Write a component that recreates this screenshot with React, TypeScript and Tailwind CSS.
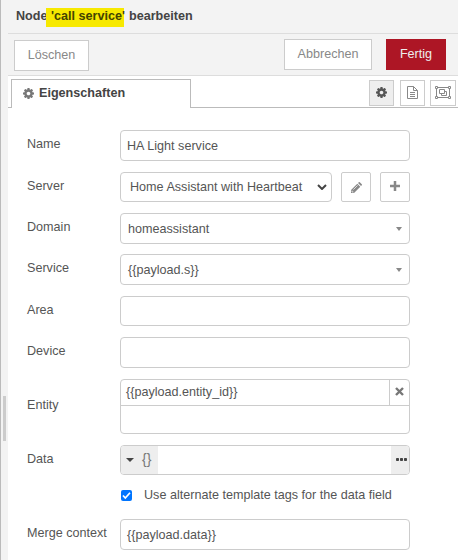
import type { ReactNode } from 'react';

function Cog({ className }: { className: string }) {
  return (
    <svg viewBox="0 128 1536 1536" className={className} fill="currentColor">
      <path d="M1024 896q0-106-75-181t-181-75-181 75-75 181 75 181 181 75 181-75 75-181zm512-109v222q0 12-8 23t-20 13l-185 28q-19 54-39 91 35 50 107 138 10 12 10 25t-9 23q-27 37-99 108t-94 71q-12 0-26-9l-138-108q-44 23-91 38-16 136-29 186-7 28-36 28h-222q-14 0-24.500-8.500t-11.500-21.500l-28-184q-49-16-90-37l-141 107q-10 9-25 9-14 0-25-11-126-114-165-168-7-10-7-23 0-12 8-23 15-21 51-66.500t54-70.500q-27-50-41-99l-183-27q-13-2-21-12.500t-8-23.500v-222q0-12 8-23t19-13l186-28q14-46 39-92-40-57-107-138-10-12-10-24 0-10 9-23 26-36 98.500-107.500t94.500-71.500q13 0 26 10l138 107q44-23 91-38 16-136 29-186 7-28 36-28h222q14 0 24.500 8.500t11.500 21.500l28 184q49 16 90 37l142-107q9-9 24-9 13 0 25 10 129 119 165 170 7 8 7 22 0 12-8 23-15 21-51 66.500t-54 70.500q26 50 41 98l183 28q13 2 21 12.500t8 23.500z" />
    </svg>
  );
}

function DocIcon() {
  return (
    <svg viewBox="0 0 11 13" className="mb-px h-[13px] w-[11px]" fill="none" stroke="currentColor">
      <path d="M.5.5h6l4 4v8H.5zM6.500.5v4h4M3 6.500h5M3 8.500h5M3 10.500h5" />
    </svg>
  );
}

function GroupIcon() {
  return (
    <svg viewBox="0 0 16 13" className="h-[13px] w-4 shrink-0" fill="none" stroke="currentColor">
      <path d="M2.500 1.500h11M2.500 11.500h11M1.500 2.500v8M14.500 2.500v8M4.500 3.500h5v4h-5zM9.500 5.500h2v4h-5v-2" />
      <path d="M.5.5h2v2h-2zM13.500.5h2v2h-2zM.5 10.500h2v2h-2zM13.500 10.500h2v2h-2z" />
    </svg>
  );
}

function Pencil() {
  return (
    <svg viewBox="0 0 11 11" className="h-[11px] w-[11px]" fill="#888">
      <path d="M0 11V8l6.300-6.300 3 3L3 11zM7 1l.8-.8q.5-.4 1 0l2 2q.4.5 0 1L10 4z" />
      <path d="M1 8.500v1.500h1.500M2.400 7.600l4.200-4.200" fill="none" stroke="white" strokeWidth=".7" />
    </svg>
  );
}

function Caret() {
  return (
    <svg viewBox="0 0 6 4" className="ml-auto mr-[7px] h-1 w-[6px]" fill="#888">
      <path d="M0 0h6L3 4z" />
    </svg>
  );
}

function Row({ label, className, children }: { label: string; className: string; children: ReactNode }) {
  return (
    <div className={`flex ${className}`}>
      <div className="flex w-[93px] shrink-0 items-center whitespace-nowrap pb-[3px]">{label}</div>
      {children}
    </div>
  );
}

const box = 'flex items-center rounded-[4px] border border-[#ccc] bg-white whitespace-nowrap';
const tool = 'flex h-[26px] items-center justify-center border border-[#ccc]';

export default function App() {
  return (
    <div className="flex h-[560px] w-[458px] overflow-hidden bg-white text-[12.6px] leading-5 text-[#555] [font-family:'Liberation_Sans',Arial,sans-serif]">
      <div className="flex w-2 shrink-0 border-l border-[#bbb] bg-[#f3f3f3] pl-[2px] pt-[396px]">
        <div className="h-[45px] w-[3px] bg-[#ccc]" />
      </div>
      <div className="flex w-[450px] flex-col">
        <header className="flex h-[34px] items-center border-b border-[#ddd] bg-[#f3f3f3] pb-[2px] pl-2 font-bold text-[#444] whitespace-pre">
          <span>Node</span>
          <span className="-mb-[3px] -ml-px mr-px h-[19px] w-[78px] bg-[#f7e900] pl-px leading-[17px] text-[#444400]">{" 'call service'"}</span>
          <span> bearbeiten</span>
        </header>
        <div className="flex h-[42px] border-b border-[#ddd] bg-[#f3f3f3] pl-[6px] pt-[5px] text-[#888]">
          <button className="mt-px flex h-[31px] w-[75px] items-center justify-center border border-[#ccc] bg-white pb-[2px]">Löschen</button>
          <button className="ml-[195px] flex h-[31px] w-[88px] items-center justify-center border border-[#ccc] bg-white pb-[2px]">Abbrechen</button>
          <button className="ml-[14px] flex h-[31px] w-[60px] items-center justify-center bg-[#ad1625] pb-[2px] text-[#eee]">Fertig</button>
        </div>
        <div className="flex h-8 items-end">
          <div className="h-px w-[3px] bg-[#bbb]" />
          <div className="flex h-[29px] w-[180px] items-center border border-b-0 border-[#bbb] pb-[2px] pl-[11px] font-bold text-[#444]">
            <Cog className="mr-[5px] h-[11px] w-[11px] text-[#777]" />
            Eigenschaften
          </div>
          <div className="flex h-7 grow border-b border-[#bbb] pl-[178px] text-[#888]">
            <div className={`${tool} w-[25px] bg-[#eee] pb-[2px] text-[#555]`}><Cog className="h-[11px] w-[11px]" /></div>
            <div className={`${tool} ml-[6px] w-[25px]`}><DocIcon /></div>
            <div className={`${tool} ml-[5px] w-[26px] pb-px`}><GroupIcon /></div>
          </div>
        </div>
        <main className="flex flex-col pl-[19px] pt-[22px]">
          <Row label="Name" className="h-[31px]">
            <div className={`${box} w-[290px] pl-[6px]`}>HA Light service</div>
          </Row>
          <Row label="Server" className="mt-[11px] h-[30px]">
            <div className={`${box} w-[212px] pb-px pl-[9px]`}>
              Home Assistant with Heartbeat
              <svg viewBox="0 0 10 6" className="ml-auto mr-1 h-[6px] w-[10px]" fill="none" stroke="#444" strokeWidth="2">
                <path d="M1 1l4 4 4-4" />
              </svg>
            </div>
            <div className="ml-[9px] flex w-[30px] items-center justify-center rounded-[2px] border border-[#ccc]">
              <Pencil />
            </div>
            <div className="ml-[9px] flex w-[30px] items-center justify-center rounded-[2px] border border-[#ccc] pb-[2px]">
              <svg viewBox="0 0 10 10" className="h-[10px] w-[10px]" stroke="#888" strokeWidth="2.500">
                <path d="M5 0v10M0 5h10" />
              </svg>
            </div>
          </Row>
          <Row label="Domain" className="mt-[11px] h-[31px]">
            <div className={`${box} w-[290px] pl-[7px]`}>homeassistant<Caret /></div>
          </Row>
          <Row label="Service" className="mt-[10px] h-[31px]">
            <div className={`${box} w-[290px] pl-[7px]`}>{'{{payload.s}}'}<Caret /></div>
          </Row>
          <Row label="Area" className="mt-[11px] h-[30px]">
            <div className={`${box} w-[290px]`} />
          </Row>
          <Row label="Device" className="mt-[11px] h-[31px]">
            <div className={`${box} w-[290px]`} />
          </Row>
          <Row label="Entity" className="mt-[11px] h-[55px]">
            <div className="w-[290px] rounded-[4px] border border-[#ccc]">
              <div className="flex h-[26px] border-b border-[#ccc]">
                <div className="flex grow items-center pb-px pl-[5px]">{'{{payload.entity_id}}'}</div>
                <div className="flex w-5 items-center justify-center border-l border-[#ccc] pb-[2px]">
                  <svg viewBox="0 0 9 9" className="h-[9px] w-[9px]" stroke="#777" strokeWidth="2.400">
                    <path d="M1 1l7 7M8 1L1 8" />
                  </svg>
                </div>
              </div>
            </div>
          </Row>
          <Row label="Data" className="mt-[11px] h-[30px]">
            <div className={`${box} w-[290px] justify-between overflow-hidden`}>
              <div className="flex h-full w-[37px] items-center bg-[#eee] pl-[5px]">
                <svg viewBox="0 0 8 4" className="h-1 w-2" fill="#444"><path d="M0 0h8L4 4z" /></svg>
                <span className="ml-2 pb-[3px] text-[14px] text-[#777]">{'{}'}</span>
              </div>
              <div className="flex h-full w-[18px] items-center bg-[#eee] pb-[2px] pl-[5px]">
                <svg viewBox="0 0 11 3" className="h-[3px] w-[11px]" fill="#444">
                  <rect width="3" height="3" rx=".8" />
                  <rect x="4" width="3" height="3" rx=".8" />
                  <rect x="8" width="3" height="3" rx=".8" />
                </svg>
              </div>
            </div>
          </Row>
          <div className="mt-[10px] flex h-5 items-center pl-[94px]">
            <div className="mt-px flex h-[11px] w-[11px] items-center justify-center rounded-[2px] bg-[#0075ff]">
              <svg viewBox="0 0 9 9" className="h-[9px] w-[9px]" fill="none" stroke="white" strokeWidth="1.700">
                <path d="M1 4.500l2.300 2.500L8 1.700" />
              </svg>
            </div>
            <span className="ml-3">Use alternate template tags for the data field</span>
          </div>
          <Row label="Merge context" className="mt-[14px] h-[31px]">
            <div className={`${box} w-[290px] pl-[6px]`}>{'{{payload.data}}'}</div>
          </Row>
        </main>
      </div>
    </div>
  );
}
